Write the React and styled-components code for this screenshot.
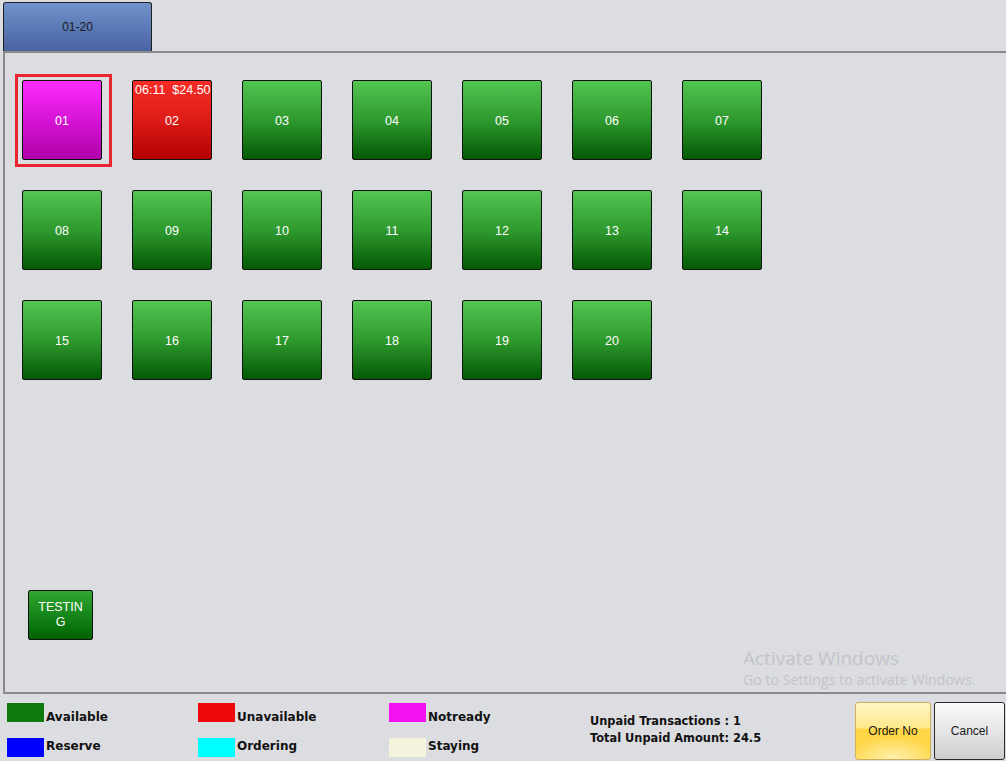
import React from "react";
import styled, { createGlobalStyle, css } from "styled-components";

const Global = createGlobalStyle`
  html, body { margin: 0; padding: 0; background: #dcdde1; }
  body { width: 1006px; height: 761px; overflow: hidden; font-family: "Liberation Sans", Arial, sans-serif; }
`;

const Screen = styled.div`
  width: 1006px;
  height: 761px;
  display: flex;
  flex-direction: column;
  background: #dcdde1;
  overflow: hidden;
`;

const TabBar = styled.div`
  height: 51px;
  display: flex;
  align-items: flex-end;
  padding-left: 3px;
`;

const Tab = styled.div`
  width: 147px;
  height: 48px;
  box-sizing: content-box;
  border: 1px solid #1e1e1e;
  border-bottom: none;
  border-radius: 3px 3px 0 0;
  background: linear-gradient(#7192cb, #4863a1);
  display: flex;
  align-items: center;
  justify-content: center;
  font-size: 12px;
  color: #1a1a1a;
`;

const Panel = styled.div`
  position: relative;
  margin-left: 3px;
  height: 639px;
  border-top: 2px solid #8a8a8a;
  border-left: 2px solid #8a8a8a;
  border-bottom: 2px solid #8a8a8a;
  display: flex;
  flex-direction: column;
  justify-content: space-between;
`;

const TileGrid = styled.div`
  display: grid;
  grid-template-columns: repeat(7, 80px);
  grid-auto-rows: 80px;
  column-gap: 30px;
  row-gap: 30px;
  padding: 27px 0 0 17px;
`;

const tones = {
  green: "linear-gradient(#52c552, #2f9a2f 50%, #035903)",
  red: "linear-gradient(#f72b25, #e01e1a 45%, #b20000)",
  magenta: "linear-gradient(#ff2cff, #d614d6 50%, #ae00a8)",
};

const Tile = styled.div`
  position: relative;
  box-sizing: border-box;
  width: 80px;
  height: 80px;
  padding-top: 1px;
  border: 1px solid #111;
  border-radius: 2px;
  background: ${(p) => tones[p.$tone]};
  display: flex;
  align-items: center;
  justify-content: center;
  color: #fff;
  font-size: 12.5px;
  ${(p) =>
    p.$selected &&
    css`
      &::before {
        content: "";
        position: absolute;
        left: -8px;
        right: -11px;
        top: -7px;
        bottom: -8px;
        border: 3px solid #ea2430;
      }
    `}
`;

const TileInfo = styled.span`
  position: absolute;
  top: 2px;
  left: 2px;
  font-size: 12.5px;
  white-space: pre;
  color: #fff;
`;

const BottomRow = styled.div`
  padding: 0 0 52px 23px;
`;

const SmallTile = styled.div`
  box-sizing: border-box;
  width: 65px;
  height: 50px;
  border: 1px solid #111;
  border-radius: 2px;
  background: linear-gradient(#30a630, #16861a 50%, #006300);
  display: flex;
  align-items: center;
  justify-content: center;
  text-align: center;
  color: #fff;
  font-size: 12.5px;
  line-height: 15px;
`;

const Watermark = styled.div`
  position: absolute;
  left: 738px;
  top: 593px;
  font-family: "Open Sans", "Noto Sans", sans-serif;
  color: #c3c4c8;
  pointer-events: none;
  white-space: nowrap;
`;

const WmTitle = styled.div`
  font-size: 19px;
  line-height: 25px;
`;

const WmSub = styled.div`
  font-size: 14.2px;
  line-height: 18px;
`;

const Footer = styled.div`
  flex: 1;
  display: flex;
  align-items: flex-start;
`;

const Legend = styled.div`
  display: grid;
  grid-template-columns: repeat(3, 191px);
  grid-auto-rows: 19px;
  row-gap: 16px;
  padding: 9px 0 0 7px;
  width: 573px;
`;

const LegendItem = styled.div`
  display: flex;
  align-items: flex-end;
  gap: 2px;
`;

const LegendLabel = styled.span`
  font-family: "DejaVu Sans", Verdana, sans-serif;
  font-weight: bold;
  font-size: 12px;
  line-height: 10px;
  color: #111;
  margin-bottom: ${(p) => (p.$second ? 6 : 0)}px;
`;

const Swatch = styled.span`
  width: 37px;
  height: 19px;
  background: ${(p) => p.$color};
  flex: none;
`;

const Summary = styled.div`
  padding-top: 19px;
  margin-left: 10px;
  font-family: "DejaVu Sans", Verdana, sans-serif;
  font-weight: bold;
  font-size: 11.4px;
  line-height: 17px;
  color: #111;
`;

const Buttons = styled.div`
  display: flex;
  gap: 3px;
  padding: 8px 1px 0 0;
  margin-left: auto;
`;

const Btn = styled.div`
  box-sizing: border-box;
  height: 58px;
  width: ${(p) => p.$w}px;
  border-radius: 3px;
  display: flex;
  align-items: center;
  justify-content: center;
  font-size: 12px;
  color: #1a1a1a;
  ${(p) =>
    p.$primary
      ? css`
          border: 1px solid #cfae5e;
          background: radial-gradient(ellipse 60% 40% at 50% 100%, #fff1b0, transparent),
            linear-gradient(#fff6c6 0%, #ffe989 45%, #ffd646 46%, #ffd84c 100%);
        `
      : css`
          border: 1px solid #2a2a2a;
          background: linear-gradient(#fbfbfb, #e6e6e8 50%, #cdcdd0);
        `}
`;

const tiles = Array.from({ length: 20 }, (_, i) => String(i + 1).padStart(2, "0"));

const legend = [
  ["#0c7b0c", "Available"],
  ["#ee0a0a", "Unavailable"],
  ["#f411f0", "Notready"],
  ["#0000ff", "Reserve"],
  ["#00ffff", "Ordering"],
  ["#f4f4dc", "Staying"],
];

export default function App() {
  return (
    <Screen>
      <Global />
      <TabBar>
        <Tab>01-20</Tab>
      </TabBar>
      <Panel>
        <TileGrid>
          {tiles.map((t) => (
            <Tile
              key={t}
              $tone={t === "01" ? "magenta" : t === "02" ? "red" : "green"}
              $selected={t === "01"}
            >
              {t === "02" && <TileInfo>{"06:11  $24.50"}</TileInfo>}
              {t}
            </Tile>
          ))}
        </TileGrid>
        <BottomRow>
          <SmallTile>
            TESTIN
            <br />G
          </SmallTile>
        </BottomRow>
        <Watermark>
          <WmTitle>Activate Windows</WmTitle>
          <WmSub>Go to Settings to activate Windows.</WmSub>
        </Watermark>
      </Panel>
      <Footer>
        <Legend>
          {legend.map(([c, l], i) => (
            <LegendItem key={l}>
              <Swatch $color={c} />
              <LegendLabel $second={i >= 3}>{l}</LegendLabel>
            </LegendItem>
          ))}
        </Legend>
        <Summary>
          <div>Unpaid Transactions : 1</div>
          <div>Total Unpaid Amount: 24.5</div>
        </Summary>
        <Buttons>
          <Btn $primary $w={76}>Order No</Btn>
          <Btn $w={71}>Cancel</Btn>
        </Buttons>
      </Footer>
    </Screen>
  );
}
